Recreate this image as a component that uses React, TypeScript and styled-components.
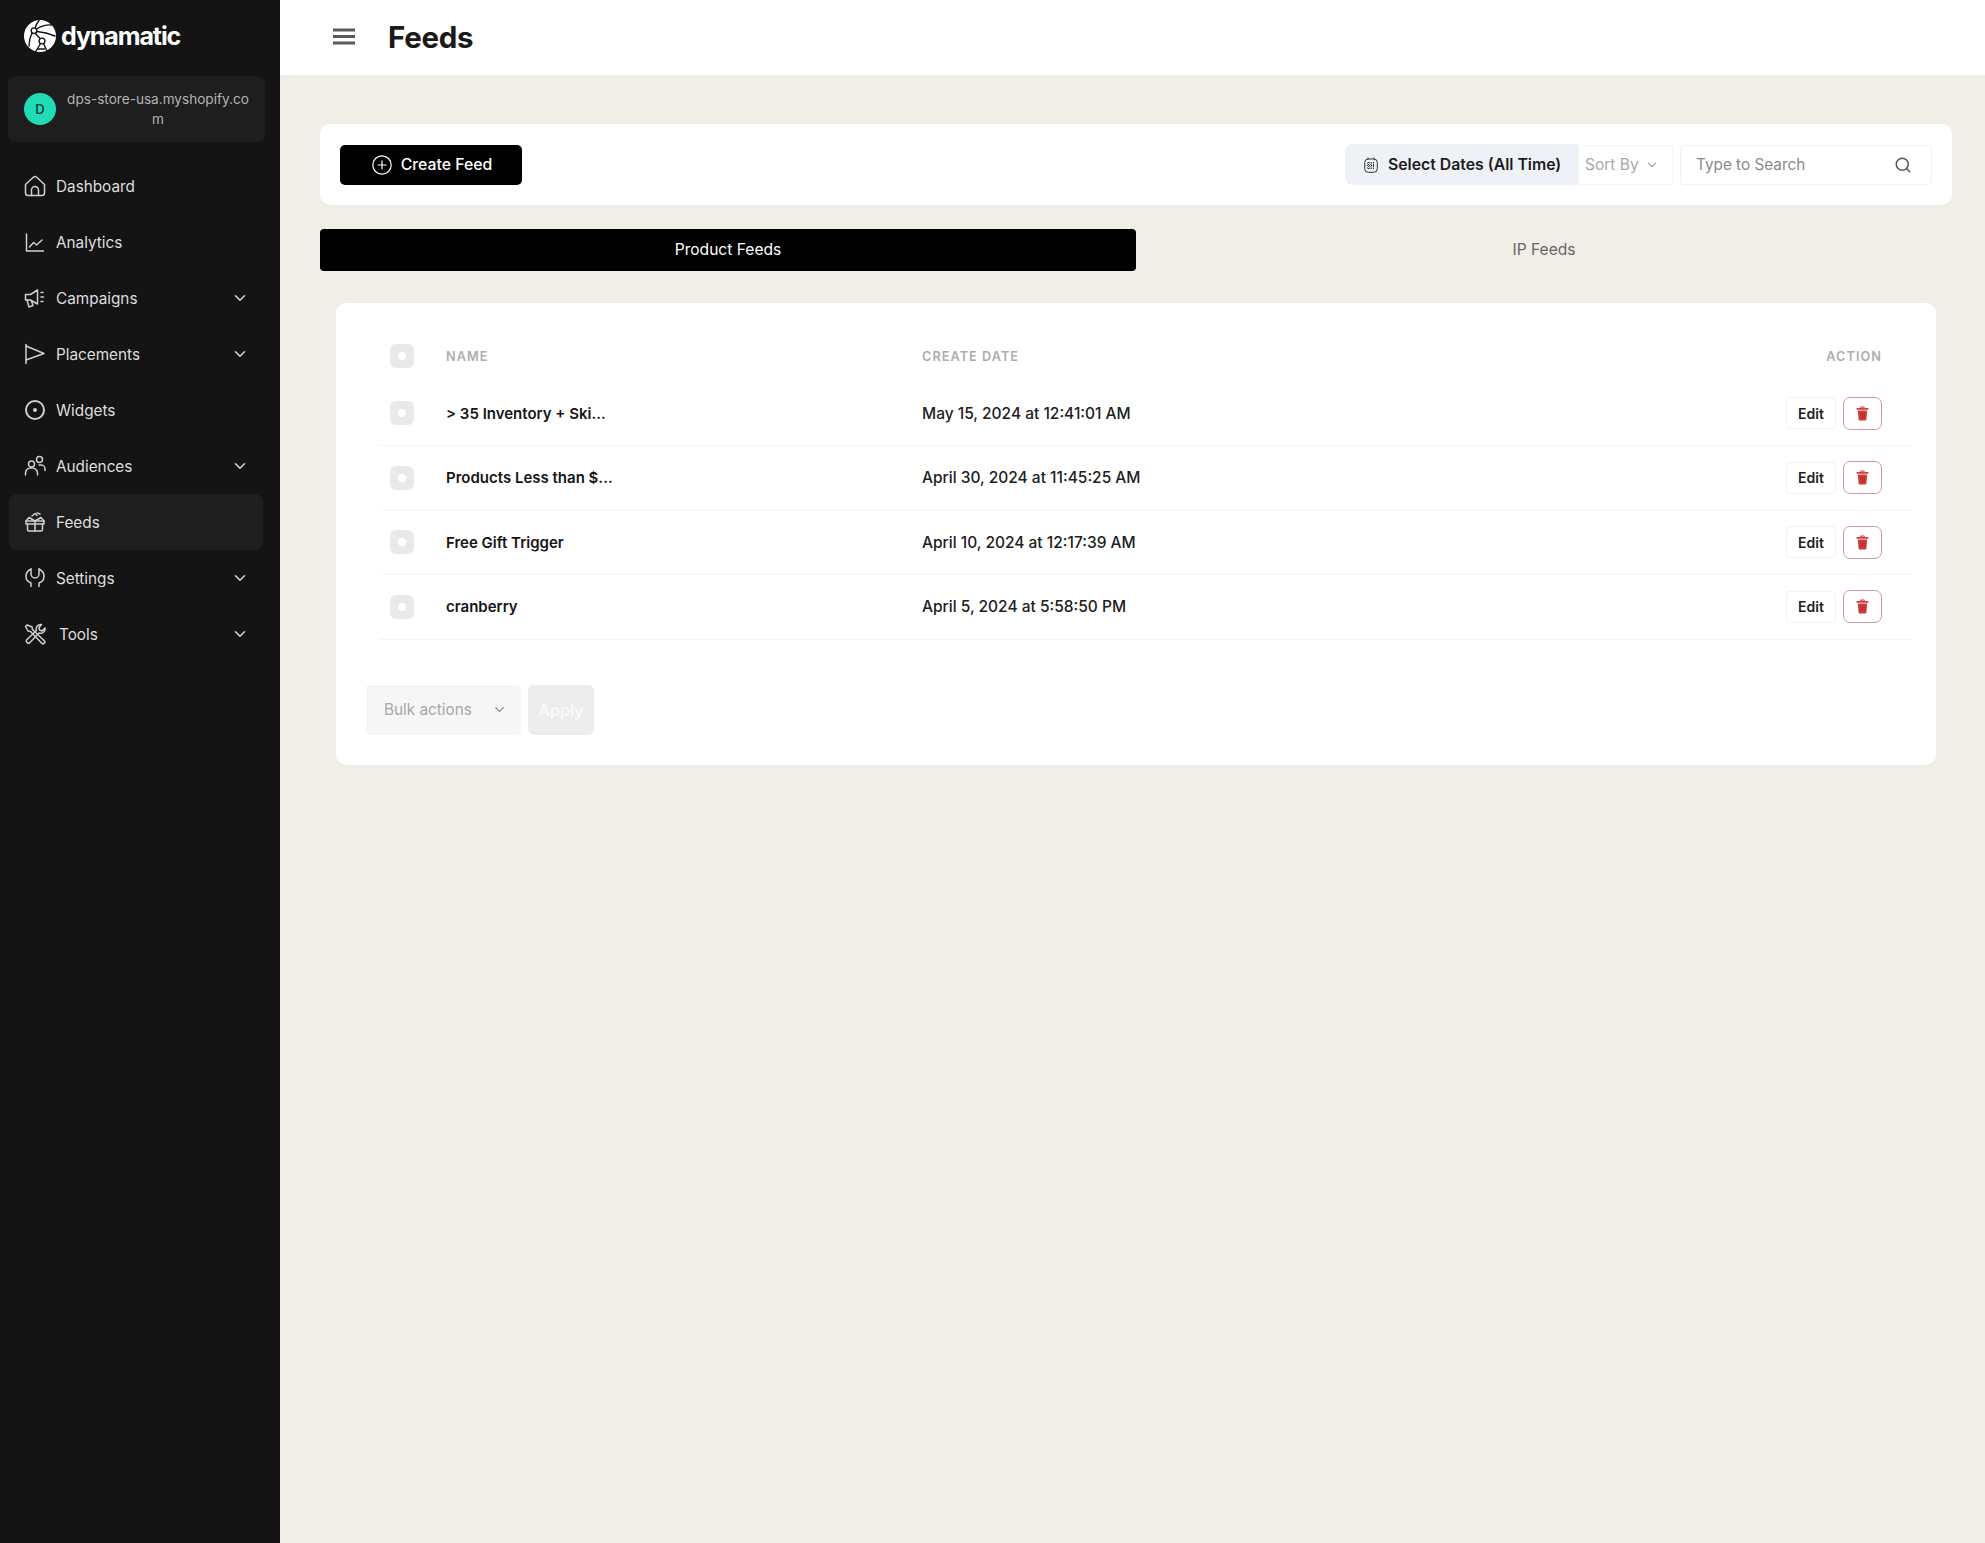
import React from "react";
import styled, { createGlobalStyle } from "styled-components";
import { ChevronDown, Search } from "lucide-react";

const Global = createGlobalStyle`
  html, body { margin: 0; padding: 0; background: #f1eee8; }
  body { font-family: Inter, "Liberation Sans", sans-serif; }
  * { box-sizing: border-box; }
`;

const Page = styled.div`
  display: flex;
  min-height: 1543px;
  width: 1985px;
`;
const Sidebar = styled.aside`
  width: 280px;
  flex: none;
  background: #141415;
  padding: 20px 15px 0 8px;
  color: #e4e4e4;
`;
const Brand = styled.div`
  display: flex;
  align-items: center;
  gap: 5px;
  height: 32px;
  padding-left: 16px;
`;
const BrandName = styled.span`
  font-size: 25px;
  font-weight: 700;
  letter-spacing: -1.1px;
  color: #fff;
`;
const Store = styled.div`
  display: flex;
  align-items: center;
  gap: 10px;
  height: 66px;
  margin-top: 24px;
  padding: 0 15px 0 16px;
  background: #1e1e1f;
  border-radius: 8px;
`;
const Avatar = styled.div`
  width: 32px;
  height: 32px;
  flex: none;
  border-radius: 50%;
  background: #1fdcb6;
  color: #14332d;
  font-size: 13px;
  font-weight: 500;
  display: flex;
  align-items: center;
  justify-content: center;
`;
const StoreName = styled.div`
  flex: 1;
  min-width: 0;
  font-size: 13.6px;
  line-height: 20px;
  color: #b4b4b4;
  text-align: center;
  word-break: break-all;
`;
const Nav = styled.nav`
  display: flex;
  flex-direction: column;
  margin-top: 16px;
`;
const NavItem = styled.div<{ $active?: boolean }>`
  display: flex;
  align-items: center;
  height: 56px;
  margin: 0 2px 0 1px;
  padding: 0 14px 0 15px;
  gap: 10px;
  border-radius: 8px;
  font-size: 15.3px;
  color: #dedede;
  background: ${(p) => (p.$active ? "#1e1e1f" : "transparent")};
  svg { flex: none; }
`;
const NavLabel = styled.span<{ $shift?: boolean }>`
  flex: 1;
  margin-left: ${(p) => (p.$shift ? "3px" : "0")};
`;
const Main = styled.main`
  flex: 1;
  min-width: 0;
`;
const Header = styled.header`
  height: 75px;
  background: #fff;
  display: flex;
  align-items: center;
  padding: 0 0 2px 53px;
  gap: 33px;
`;
const Title = styled.h1`
  margin: 0;
  font-size: 29.5px;
  font-weight: 700;
  color: #1a1a1a;
  letter-spacing: -0.3px;
`;
const Content = styled.div`
  padding: 49px 33px 0 40px;
`;
const Toolbar = styled.div`
  height: 81px;
  background: #fff;
  border-radius: 10px;
  padding: 0 20px;
  display: flex;
  align-items: center;
  justify-content: space-between;
`;
const CreateButton = styled.button`
  width: 182px;
  height: 40px;
  background: #000;
  color: #fff;
  border: 0;
  border-radius: 5px;
  font: 500 15.8px Inter, sans-serif;
  display: flex;
  align-items: center;
  justify-content: center;
  gap: 9px;
  padding: 0 6px 0 8px;
`;
const Filters = styled.div`
  display: flex;
  align-items: center;
`;
const DateButton = styled.div`
  width: 233px;
  height: 41px;
  background: #eef1f6;
  border-radius: 8px 0 0 8px;
  display: flex;
  align-items: center;
  gap: 10px;
  padding-left: 19px;
  font-size: 15.8px;
  font-weight: 600;
  color: #1c1c1c;
  white-space: nowrap;
`;
const SortBy = styled.div`
  width: 95px;
  height: 40px;
  background: #fff;
  border: 1px solid #f4f4f4;
  border-radius: 0 4px 4px 0;
  display: flex;
  align-items: center;
  gap: 6px;
  padding-left: 6px;
  font-size: 15.5px;
  color: #a8a8a8;
`;
const SearchBox = styled.div`
  width: 252px;
  height: 40px;
  margin-left: 7px;
  border: 1px solid #f2f2f2;
  border-radius: 4px;
  padding: 0 19px 0 15px;
  display: flex;
  align-items: center;
  justify-content: space-between;
  font-size: 15.3px;
  color: #8a8a8a;
`;
const Tabs = styled.div`
  display: grid;
  grid-template-columns: 1fr 1fr;
  margin-top: 24px;
`;
const Tab = styled.div<{ $active?: boolean }>`
  height: 42px;
  display: flex;
  align-items: center;
  justify-content: center;
  border-radius: 4px;
  padding-bottom: 1px;
  font-size: 15.6px;
  background: ${(p) => (p.$active ? "#000" : "transparent")};
  color: ${(p) => (p.$active ? "#fff" : "#666")};
`;
const Card = styled.section`
  margin: 32px 16px 0;
  height: 462px;
  background: #fff;
  border-radius: 10px;
  padding: 32px 22px 0 30px;
`;
const Grid = styled.div`
  display: grid;
  grid-template-columns: 56px 476px 1fr 150px;
`;
const HeaderRow = styled(Grid)`
  height: 42px;
  margin: 0 32px 4.500px 0;
  align-items: center;
  padding-left: 24px;
`;
const HeadCell = styled.div<{ $right?: boolean }>`
  font-size: 12.7px;
  font-weight: 600;
  letter-spacing: 1.05px;
  color: #adadad;
  text-align: ${(p) => (p.$right ? "right" : "left")};
`;
const Row = styled(Grid)`
  height: 64.500px;
  margin-left: 14px;
  padding-left: 10px;
  align-items: center;
  border-bottom: 1px solid #f5f5f3;
`;
const Check = styled.div`
  width: 24px;
  height: 24px;
  background: #e9e9eb;
  border-radius: 6px;
  display: flex;
  align-items: center;
  justify-content: center;
  &::after {
    content: "";
    width: 8px;
    height: 8px;
    border-radius: 50%;
    background: #fff;
  }
`;
const NameCell = styled.div`
  font-size: 15px;
  font-weight: 600;
  color: #151515;
`;
const DateCell = styled.div`
  font-size: 15.5px;
  font-weight: 500;
  color: #202020;
`;
const Actions = styled.div`
  display: flex;
  justify-content: flex-end;
  align-items: center;
  gap: 7px;
  margin-right: 32px;
`;
const EditButton = styled.div`
  width: 50px;
  height: 32px;
  border: 1px solid #f2f2f2;
  border-radius: 4px;
  display: flex;
  align-items: center;
  justify-content: center;
  font-size: 14px;
  font-weight: 600;
  color: #222;
`;
const DeleteButton = styled.div`
  width: 39px;
  height: 33px;
  border: 1px solid #d29a9a;
  border-radius: 7px;
  display: flex;
  align-items: center;
  justify-content: center;
`;
const Bulk = styled.div`
  display: flex;
  gap: 7px;
  margin-top: 45px;
`;
const BulkSelect = styled.div`
  width: 155px;
  height: 50px;
  background: #f6f6f6;
  border-radius: 4px;
  padding: 0 14px 0 18px;
  display: flex;
  align-items: center;
  justify-content: space-between;
  font-size: 15.3px;
  color: #a6a6a6;
`;
const ApplyButton = styled.div`
  width: 66px;
  height: 50px;
  background: #ededed;
  border-radius: 6px;
  display: flex;
  align-items: center;
  justify-content: center;
  font-size: 16px;
  font-weight: 600;
  color: #f9f9f9;
`;

const Logo = () => (
  <svg width="32" height="32" viewBox="0 0 32 32" fill="none">
    <circle cx="16" cy="16" r="16" fill="#fff" />
    <g stroke="#141415" strokeWidth="1.4" fill="none" strokeLinecap="round">
      <path d="M11 8C12 5 13 3 15 0.500M12.500 9c5-3 10-4.500 15-4M13 11.500c6 .5 12 2 18 4.500M8 13c-2 4-3 8-3 13M11.500 13.500l4.500 5" />
      <path d="M16.500 23.500L11.500 32M19.500 23.500L23 31M13.500 29h7" />
      <circle cx="10" cy="10.700" r="2.800" />
      <circle cx="18" cy="21" r="2.900" />
    </g>
  </svg>
);

const MenuIcon = () => (
  <svg width="22" height="17" viewBox="0 0 22 17" fill="#5a5a5a">
    <rect y="0.500" width="22" height="3" />
    <rect y="7" width="22" height="3" />
    <rect y="13.500" width="22" height="3" />
  </svg>
);

const TrashIcon = () => (
  <svg width="13" height="15" viewBox="0 0 13 15" fill="#d43c3c">
    <rect x="0.500" y="2" width="12" height="1.800" rx="0.500" />
    <path d="M4.300 2.500V1.300c0-.5.3-.8.8-.8h2.800c.5 0 .8.3.8.8v1.200H7.500V1.500h-2v1z" />
    <path d="M1.800 4.500h9.400l-.8 9.300c0 .5-.4.8-.9.800H3.500c-.5 0-.9-.3-.9-.8z" />
    <path d="M4.800 6.500v6M6.500 6.500v6M8.200 6.500v6" stroke="#a82c2c" strokeWidth="0.700" />
  </svg>
);

type IconProps = { children: React.ReactNode };
const Ico = ({ children }: IconProps) => (
  <svg width="22" height="22" viewBox="0 0 22 22" fill="none" stroke="#cfcfcf" strokeWidth="1.5" strokeLinecap="round" strokeLinejoin="round">
    {children}
  </svg>
);

const icons: Record<string, React.ReactNode> = {
  Dashboard: <Ico><path d="M1.500 9.500L9.300 2.300a2.500 2.500 0 0 1 3.400 0l7.800 7.200V18a2.500 2.500 0 0 1-2.500 2.500H4A2.500 2.500 0 0 1 1.500 18z" /><path d="M7.500 20.500V15a3.500 3.500 0 0 1 7 0v5.500" /></Ico>,
  Analytics: <Ico><path d="M2.500 3v17h17" /><path d="M5.500 16l4-4.500 3 2.500 5.500-5" /></Ico>,
  Campaigns: <Ico><path d="M1.500 7.500h5L13.500 3v14L6.500 13h-5z" /><path d="M3 13l2 7 4-1.500-1.500-4.500" /><path d="M17 5.500h2M17 10h2.500M17 14.500h2" /></Ico>,
  Placements: <Ico><path d="M2 1.500v19" /><path d="M2 3l18 7.500L2 17" /></Ico>,
  Widgets: <Ico><circle cx="11" cy="11" r="9" strokeWidth="2" /><circle cx="11" cy="11" r="2" fill="#cfcfcf" stroke="none" /></Ico>,
  Audiences: <Ico><circle cx="7.500" cy="9" r="3" /><circle cx="15.500" cy="4.500" r="3" /><path d="M1.500 20v-2a5 5 0 0 1 5-5h2a5 5 0 0 1 5 5v2" /><path d="M15 10h2a4 4 0 0 1 4 4v1.500" /></Ico>,
  Feeds: <Ico><path d="M2 10h18v3H2z" /><path d="M3.500 13v5.500a1.500 1.500 0 0 0 1.500 1.500h12a1.500 1.500 0 0 0 1.500-1.500V13" /><path d="M11 10v10M11 10L5 6.500l-3 3.500M11 10l6-3.500 3 3.500" /><path d="M8 5l3-2.500 2 2M13 2l3 1" /></Ico>,
  Settings: <Ico><path d="M7 2C3.500 3.500 2 6.500 2 9.500c0 3 2 5.500 5 6.500v3.500" /><path d="M15 2c3.500 1.500 5 4.500 5 7.500 0 3-2 5.500-5 6.500v3.500" /><path d="M7 2v5a4 4 0 0 0 8 0V2" /></Ico>,
  Tools: <Ico><path d="M3 2L1.500 3.500 4 8l2.500.5L18 20.500a1.800 1.800 0 0 0 2.500-2.500L8.500 6.500 8 4z" /><path d="M17.500 1.500a4.500 4.500 0 0 0-5 6L2.500 17a2.300 2.300 0 0 0 3 3l9.500-10a4.500 4.500 0 0 0 6-5l-3 3-2.500-1-.5-2.500z" /></Ico>,
};

const navItems: { label: string; chevron?: boolean; active?: boolean }[] = [
  { label: "Dashboard" },
  { label: "Analytics" },
  { label: "Campaigns", chevron: true },
  { label: "Placements", chevron: true },
  { label: "Widgets" },
  { label: "Audiences", chevron: true },
  { label: "Feeds", active: true },
  { label: "Settings", chevron: true },
  { label: "Tools", chevron: true },
];

const rows = [
  { name: "> 35 Inventory + Ski...", date: "May 15, 2024 at 12:41:01 AM" },
  { name: "Products Less than $...", date: "April 30, 2024 at 11:45:25 AM" },
  { name: "Free Gift Trigger", date: "April 10, 2024 at 12:17:39 AM" },
  { name: "cranberry", date: "April 5, 2024 at 5:58:50 PM" },
];

export default function App() {
  return (
    <Page>
      <Global />
      <Sidebar>
        <Brand>
          <Logo />
          <BrandName>dynamatic</BrandName>
        </Brand>
        <Store>
          <Avatar>D</Avatar>
          <StoreName>dps-store-usa.myshopify.com</StoreName>
        </Store>
        <Nav>
          {navItems.map((n) => (
            <NavItem key={n.label} $active={n.active}>
              {icons[n.label]}
              <NavLabel $shift={n.label === "Tools"}>{n.label}</NavLabel>
              {n.chevron && <ChevronDown size={18} color="#d8d8d8" strokeWidth={2} />}
            </NavItem>
          ))}
        </Nav>
      </Sidebar>
      <Main>
        <Header>
          <MenuIcon />
          <Title>Feeds</Title>
        </Header>
        <Content>
          <Toolbar>
            <CreateButton>
              <svg width="20" height="20" viewBox="0 0 20 20" fill="none" stroke="#fff" strokeWidth="1.2">
                <circle cx="10" cy="10" r="9.200" />
                <path d="M10 5.500v9M5.500 10h9" />
              </svg>
              Create Feed
            </CreateButton>
            <Filters>
              <DateButton>
                <svg width="14" height="16" viewBox="0 0 14 16" fill="none" stroke="#333" strokeWidth="1">
                  <rect x="0.700" y="2" width="12.600" height="13.300" rx="3.500" />
                  <path d="M4 0.500v2M10 0.500v2" />
                  <path d="M3 6h8M3 8.500h8M3 11h8M4.500 5v7.500M7 5v7.500M9.500 5v7.500" strokeDasharray="1 1" />
                </svg>
                Select Dates (All Time)
              </DateButton>
              <SortBy>
                Sort By
                <ChevronDown size={14} />
              </SortBy>
              <SearchBox>
                Type to Search
                <Search size={18} color="#555" />
              </SearchBox>
            </Filters>
          </Toolbar>
          <Tabs>
            <Tab $active>Product Feeds</Tab>
            <Tab>IP Feeds</Tab>
          </Tabs>
          <Card>
            <HeaderRow>
              <Check />
              <HeadCell>NAME</HeadCell>
              <HeadCell>CREATE DATE</HeadCell>
              <HeadCell $right>ACTION</HeadCell>
            </HeaderRow>
            {rows.map((r) => (
              <Row key={r.name}>
                <Check />
                <NameCell>{r.name}</NameCell>
                <DateCell>{r.date}</DateCell>
                <Actions>
                  <EditButton>Edit</EditButton>
                  <DeleteButton>
                    <TrashIcon />
                  </DeleteButton>
                </Actions>
              </Row>
            ))}
            <Bulk>
              <BulkSelect>
                Bulk actions
                <ChevronDown size={15} color="#888" />
              </BulkSelect>
              <ApplyButton>Apply</ApplyButton>
            </Bulk>
          </Card>
        </Content>
      </Main>
    </Page>
  );
}
